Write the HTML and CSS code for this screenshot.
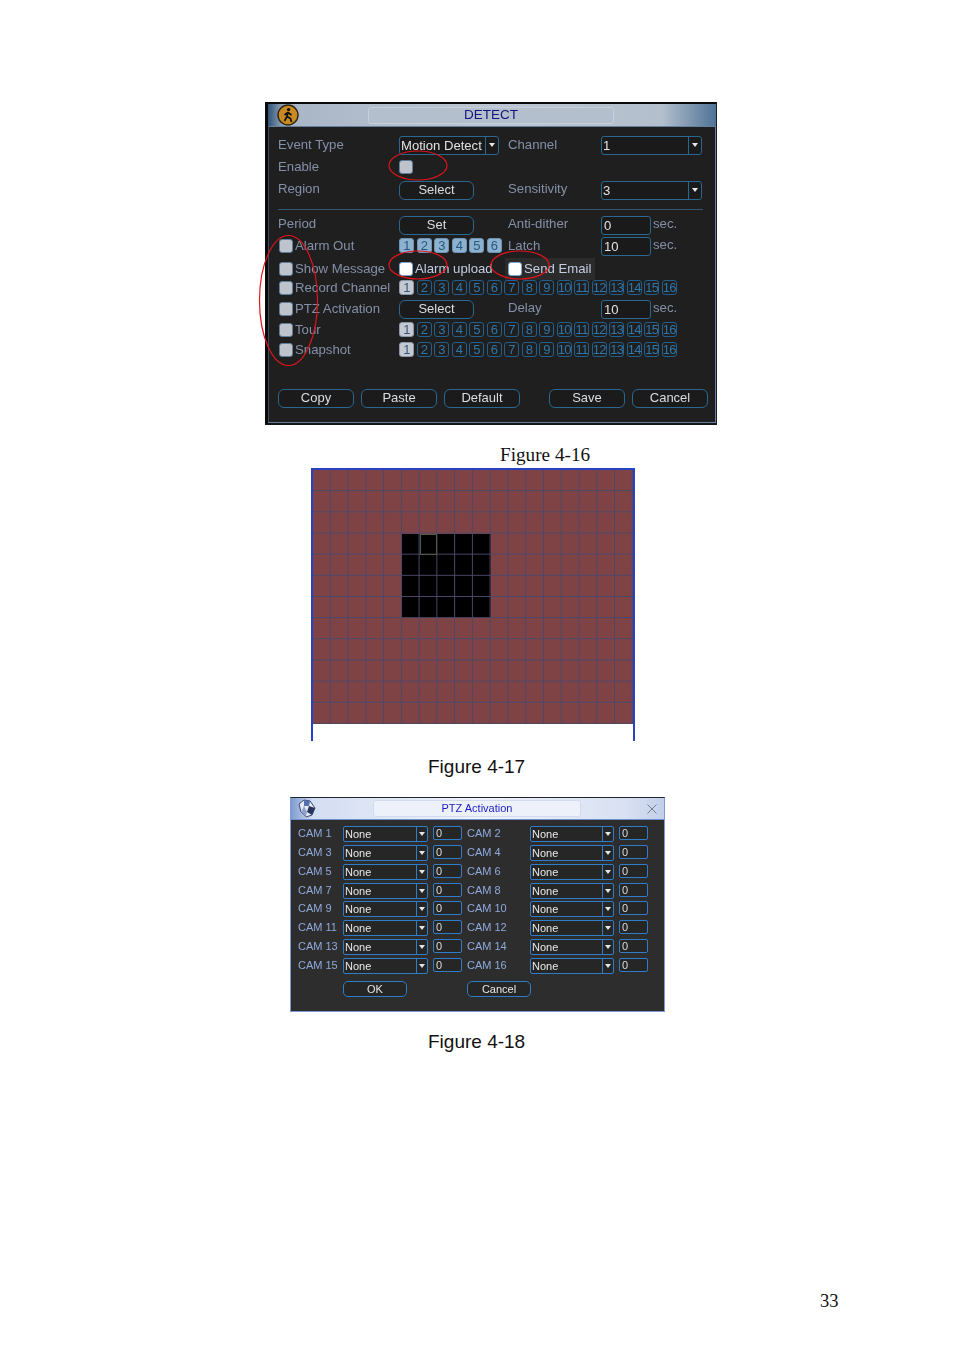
FILE: index.html
```html
<!DOCTYPE html>
<html lang="en">
<head>
    <meta charset="UTF-8">
    <meta name="viewport" content="width=device-width, initial-scale=1.0">
    <title>Figures 4-16 to 4-18</title>
    <link rel="stylesheet" href="styles.css">
</head>
<body>
<div class="page">

    <!-- Figure 4-16 -->
    <div class="detect">
        <div class="detect-title">
            <svg class="detect-icon" width="22" height="22" viewBox="0 0 22 22">
                <circle cx="11" cy="11" r="10" fill="#c98a22" stroke="#2b2412" stroke-width="1.4"/>
                <circle cx="11.6" cy="5.6" r="1.7" fill="#111"/>
                <path d="M11 8 L10 12.5 L7.5 17 M10 12.5 L13.5 14.5 L14.5 18 M10.8 8.5 L7.5 11 M11 8.5 L14.5 11" fill="none" stroke="#111" stroke-width="1.7"/>
            </svg>
            <div class="detect-caption">DETECT</div>
        </div>
        <div class="detect-panel">
            <div class="detect-form">
                <div class="lbl first">Event Type</div>
                <div class="sel sel-event"><span>Motion Detect</span><i></i></div>
                <div class="lbl">Channel</div>
                <div class="sel sel-wide"><span>1</span><i></i></div>

                <div class="lbl first">Enable</div>
                <div class="chk"></div>

                <div class="lbl up first">Region</div>
                <div class="btn">Select</div>
                <div class="lbl up">Sensitivity</div>
                <div class="sel sel-wide"><span>3</span><i></i></div>

                <div class="divider"></div>

                <div class="lbl up first">Period</div>
                <div class="btn">Set</div>
                <div class="lbl up">Anti-dither</div>
                <div class="num-wrap"><div class="num">0</div><span class="lbl">sec.</span></div>

                <div class="chk-row first"><div class="chk"></div><span class="lbl">Alarm Out</span></div>
                <div class="channels">
                    <b class="ch on">1</b><b class="ch on">2</b><b class="ch on">3</b><b class="ch on">4</b><b class="ch on">5</b><b class="ch on">6</b>
                </div>
                <div class="lbl">Latch</div>
                <div class="num-wrap"><div class="num">10</div><span class="lbl">sec.</span></div>

                <div class="chk-row first"><div class="chk"></div><span class="lbl">Show Message</span></div>
                <div class="chk-row"><div class="chk white"></div><span class="lbl bright">Alarm upload</span></div>
                <div class="chk-row send-email"><div class="chk white"></div><span class="lbl bright">Send Email</span></div>

                <div class="chk-row first"><div class="chk"></div><span class="lbl">Record Channel</span></div>
                <div class="channels span3">
                    <b class="ch sel-ch">1</b><b class="ch">2</b><b class="ch">3</b><b class="ch">4</b><b class="ch">5</b><b class="ch">6</b><b class="ch">7</b><b class="ch">8</b><b class="ch">9</b><b class="ch">10</b><b class="ch">11</b><b class="ch">12</b><b class="ch">13</b><b class="ch">14</b><b class="ch">15</b><b class="ch">16</b>
                </div>

                <div class="chk-row first"><div class="chk"></div><span class="lbl">PTZ Activation</span></div>
                <div class="btn">Select</div>
                <div class="lbl up">Delay</div>
                <div class="num-wrap"><div class="num">10</div><span class="lbl">sec.</span></div>

                <div class="chk-row first"><div class="chk"></div><span class="lbl">Tour</span></div>
                <div class="channels span3">
                    <b class="ch sel-ch">1</b><b class="ch">2</b><b class="ch">3</b><b class="ch">4</b><b class="ch">5</b><b class="ch">6</b><b class="ch">7</b><b class="ch">8</b><b class="ch">9</b><b class="ch">10</b><b class="ch">11</b><b class="ch">12</b><b class="ch">13</b><b class="ch">14</b><b class="ch">15</b><b class="ch">16</b>
                </div>

                <div class="chk-row first"><div class="chk"></div><span class="lbl">Snapshot</span></div>
                <div class="channels span3">
                    <b class="ch sel-ch">1</b><b class="ch">2</b><b class="ch">3</b><b class="ch">4</b><b class="ch">5</b><b class="ch">6</b><b class="ch">7</b><b class="ch">8</b><b class="ch">9</b><b class="ch">10</b><b class="ch">11</b><b class="ch">12</b><b class="ch">13</b><b class="ch">14</b><b class="ch">15</b><b class="ch">16</b>
                </div>
            </div>
            <div class="detect-footer">
                <div class="btn">Copy</div>
                <div class="btn">Paste</div>
                <div class="btn">Default</div>
                <div class="btn save-btn">Save</div>
                <div class="btn">Cancel</div>
            </div>
        </div>
        <!-- hand drawn red marks -->
        <svg class="marks" width="452" height="323" viewBox="0 0 452 323">
            <ellipse cx="153" cy="63.5" rx="29" ry="14.5"/>
            <ellipse cx="23.5" cy="198.5" rx="29" ry="65"/>
            <ellipse cx="153" cy="163" rx="29" ry="14"/>
            <ellipse cx="255" cy="163" rx="29" ry="14"/>
        </svg>
    </div>
    <p class="caption-serif">Figure 4-16</p>

    <!-- Figure 4-17 -->
    <div class="motion">
        <div class="motion-grid">
            <div class="motion-black"></div>
            <div class="motion-cursor"></div>
        </div>
    </div>
    <p class="caption-sans caption-17">Figure 4-17</p>

    <!-- Figure 4-18 -->
    <div class="ptz">
        <div class="ptz-title">
            <svg class="ptz-icon" width="20" height="19" viewBox="0 0 20 19">
                <polygon points="2,5 7,1 13,2 18,9 15,16 9,18 4,13" fill="#e6ebf5" stroke="#39496e" stroke-width="1"/>
                <polygon points="7,1 13,2 12,7 7,7" fill="#5672ae"/>
                <polygon points="12,7 18,9 15,16 10,13" fill="#26365c"/>
                <polygon points="4,13 7,7 10,13 9,18" fill="#8fa3cc"/>
            </svg>
            <div class="ptz-caption">PTZ Activation</div>
            <svg class="ptz-close" width="10" height="10" viewBox="0 0 10 10">
                <path d="M0.5 0.5 L9.5 9.5 M9.5 0.5 L0.5 9.5" stroke="#7b7f88" stroke-width="1" fill="none"/>
            </svg>
        </div>
        <div class="ptz-panel">
            <div class="ptz-form">
                <div class="cam">CAM 1</div><div class="psel"><span>None</span><i></i></div><div class="pnum">0</div>
                <div class="cam">CAM 2</div><div class="psel"><span>None</span><i></i></div><div class="pnum">0</div>
                <div class="cam">CAM 3</div><div class="psel"><span>None</span><i></i></div><div class="pnum">0</div>
                <div class="cam">CAM 4</div><div class="psel"><span>None</span><i></i></div><div class="pnum">0</div>
                <div class="cam">CAM 5</div><div class="psel"><span>None</span><i></i></div><div class="pnum">0</div>
                <div class="cam">CAM 6</div><div class="psel"><span>None</span><i></i></div><div class="pnum">0</div>
                <div class="cam">CAM 7</div><div class="psel"><span>None</span><i></i></div><div class="pnum">0</div>
                <div class="cam">CAM 8</div><div class="psel"><span>None</span><i></i></div><div class="pnum">0</div>
                <div class="cam">CAM 9</div><div class="psel"><span>None</span><i></i></div><div class="pnum">0</div>
                <div class="cam">CAM 10</div><div class="psel"><span>None</span><i></i></div><div class="pnum">0</div>
                <div class="cam">CAM 11</div><div class="psel"><span>None</span><i></i></div><div class="pnum">0</div>
                <div class="cam">CAM 12</div><div class="psel"><span>None</span><i></i></div><div class="pnum">0</div>
                <div class="cam">CAM 13</div><div class="psel"><span>None</span><i></i></div><div class="pnum">0</div>
                <div class="cam">CAM 14</div><div class="psel"><span>None</span><i></i></div><div class="pnum">0</div>
                <div class="cam">CAM 15</div><div class="psel"><span>None</span><i></i></div><div class="pnum">0</div>
                <div class="cam">CAM 16</div><div class="psel"><span>None</span><i></i></div><div class="pnum">0</div>
            </div>
            <div class="ptz-footer">
                <div class="pbtn">OK</div>
                <div class="pbtn">Cancel</div>
            </div>
        </div>
    </div>
    <p class="caption-sans caption-18">Figure 4-18</p>

    <p class="page-no">33</p>
</div>
</body>
</html>
```

FILE: styles.css
```css
* {
    box-sizing: border-box;
}

body {
    margin: 0;
    background-color: #fff;
    font-family: "Liberation Sans", Arial, sans-serif;
}

.page {
    width: 954px;
    height: 1350px;
    padding-top: 102px;
    overflow: hidden;
}

/* Figure 4-16 */
.detect {
    position: relative;
    width: 452px;
    height: 323px;
    margin-left: 265px;
    background-color: #1f1f1f;
    border-top: 2px solid #0a0a0a;
    border-left: 3px solid #0a0a0a;
    border-bottom: 2px solid #10161c;
    border-right: 1px solid #1a2026;
    display: flex;
    flex-direction: column;
}

.detect-title {
    display: flex;
    align-items: center;
    height: 22px;
    padding-left: 9px;
    background: linear-gradient(to right, #2f5378 0, #a9b6c6 4%, #bcc6d2 50%, #b3bfcc 88%, #4f7398 100%);
    filter: blur(0.4px);
}

.detect-icon {
    flex: none;
}

.detect-caption {
    width: 246px;
    height: 17px;
    margin-left: 69px;
    background-color: #b4bfce;
    border: 1px solid #c6cfda;
    border-radius: 3px;
    color: #14147c;
    font-size: 13.5px;
    line-height: 13px;
    text-align: center;
}

.detect-panel {
    flex: 1;
    border: 1px solid #64809c;
    border-left-color: #3b4c5c;
    padding: 7px 0 0 9px;
    filter: blur(0.4px);
}

.detect-form {
    display: grid;
    grid-template-columns: 121px 109px 93px 102px;
    grid-template-rows: 22px 22px 24px 14px 18px 24px 22px 16px 26px 16px 24px;
    align-items: center;
}

.first {
    grid-column: 1;
}

.lbl {
    margin-top: -2px;
    color: #8490a8;
    font-size: 13.2px;
    white-space: nowrap;
}

.lbl.up {
    margin-top: -4px;
}

.lbl.bright {
    color: #c3cee2;
}

.chk-row .lbl {
    margin-top: 0;
}

.divider {
    grid-column: 1 / -1;
    height: 1px;
    background-color: #35566e;
}

.sel {
    display: flex;
    height: 19px;
    background-color: #1a1a1a;
    border: 1.5px solid #29688f;
    border-radius: 3px;
    color: #e2e2e2;
    font-size: 13.1px;
    line-height: 17px;
}

.sel span {
    flex: 1;
    padding-left: 1px;
}

.sel i {
    position: relative;
    width: 13px;
    border-left: 1px solid #29688f;
}

.sel i::after,
.psel i::after {
    content: "";
    position: absolute;
    top: 6px;
    left: 3px;
    border-top: 4px solid #e6e6e6;
    border-left: 3px solid transparent;
    border-right: 3px solid transparent;
}

.sel-event {
    width: 100px;
}

.sel-wide {
    width: 101px;
}

.chk {
    flex: none;
    width: 14px;
    height: 14px;
    background-color: #bfc3cb;
    border: 1px solid #5d7d9c;
    border-radius: 3px;
}

.chk.white {
    background-color: #fff;
    border-color: #7ea4c8;
}

.chk-row {
    display: flex;
    align-items: center;
    gap: 2px;
    height: 100%;
    margin-top: -1px;
}

.chk-row.first {
    padding-left: 1px;
}

.send-email {
    grid-column: 3 / 5;
    width: 90px;
    margin-left: -3px;
    padding-left: 3px;
    background-color: #2b2b2b;
}

.btn {
    width: 75px;
    height: 19px;
    background-color: #1b1b1b;
    border: 1.5px solid #29688f;
    border-radius: 6px;
    color: #d9dde2;
    font-size: 13px;
    line-height: 16px;
    text-align: center;
}

.num-wrap {
    display: flex;
    align-items: center;
    gap: 2px;
}

.num-wrap .lbl {
    margin-top: -3px;
}

.num {
    width: 50px;
    height: 19px;
    padding-left: 2px;
    background-color: #1a1a1a;
    border: 1.5px solid #29688f;
    border-radius: 3px;
    color: #e2e2e2;
    font-size: 13.1px;
    line-height: 17px;
}

.channels {
    display: flex;
    gap: 2.53px;
    margin-top: -2px;
}

.span3 {
    grid-column: 2 / 5;
}

.ch {
    flex: none;
    width: 15px;
    height: 15px;
    border: 1px solid #235f8c;
    border-radius: 3px;
    color: #2f76aa;
    font-size: 13px;
    font-weight: normal;
    line-height: 13px;
    text-align: center;
    letter-spacing: -0.6px;
}

.ch.on {
    background-color: #8db2d0;
    border-color: #6d94b5;
    color: #28587f;
}

.ch.sel-ch {
    background-color: #c4c8d0;
    border-color: #8c98a8;
    color: #34587c;
}

.detect-footer {
    display: flex;
    gap: 7px;
    margin-top: 27px;
}

.detect-footer .btn {
    width: 76px;
}

.detect-footer .save-btn {
    margin-left: 22px;
}

.marks {
    position: absolute;
    top: -2px;
    left: -3px;
    overflow: visible;
    pointer-events: none;
}

.marks ellipse {
    fill: none;
    stroke: #e0141c;
    stroke-width: 1.2;
}

/* captions */
.caption-serif {
    margin: 19px 0 0 500px;
    font-family: "Liberation Serif", "Times New Roman", serif;
    font-size: 19.2px;
    line-height: 21px;
    color: #111;
}

.caption-sans {
    font-size: 19px;
    line-height: 21px;
    color: #111;
}

.caption-17 {
    margin: 15px 0 20px 428px;
}

.caption-18 {
    margin: 19px 0 0 428px;
}

.page-no {
    margin: 239px 0 0 820px;
    font-family: "Liberation Serif", "Times New Roman", serif;
    font-size: 18.5px;
    line-height: 21px;
    color: #111;
}

/* Figure 4-17 */
.motion {
    width: 324px;
    height: 273px;
    margin: 3px 0 0 311px;
    border: 2px solid #2743c4;
    border-bottom: none;
}

.motion-grid {
    position: relative;
    display: grid;
    grid-template-columns: repeat(18, 1fr);
    grid-template-rows: repeat(12, 1fr);
    width: 320px;
    height: 254px;
    background-color: #7f4345;
    filter: blur(0.4px);
}

/* the lines run over the black cells too */
.motion-grid::after {
    content: "";
    position: absolute;
    inset: 0;
    background-image:
        linear-gradient(to left, #4a4868 1.3px, transparent 1.3px),
        linear-gradient(to top, #4a4868 1.3px, transparent 1.3px);
    background-size: 17.78px 21.17px;
}

.motion-black {
    grid-column: 6 / 11;
    grid-row: 4 / 8;
    background-color: #000;
}

.motion-cursor {
    grid-column: 7;
    grid-row: 4;
    position: relative;
    z-index: 1;
    border: 1px solid #4f5c42;
}

/* Figure 4-18 */
.ptz {
    width: 375px;
    height: 215px;
    margin-left: 290px;
    background-color: #2d2d2d;
    border: 1px solid #7d9ad6;
    border-top: 1px solid #20242e;
    display: flex;
    flex-direction: column;
    filter: blur(0.3px);
}

.ptz-title {
    position: relative;
    display: flex;
    align-items: center;
    height: 22px;
    padding-left: 6px;
    background: linear-gradient(to right, #7e9bd0 0, #d4def2 6%, #eef2fa 50%, #d8e0f2 90%, #c3cfea 100%);
    border-bottom: 1px solid #6f8fcf;
}

.ptz-icon {
    flex: none;
}

.ptz-caption {
    width: 208px;
    height: 17px;
    margin-left: 56px;
    background-color: #edf1fa;
    border: 1px solid #d3dcef;
    border-radius: 3px;
    color: #1d1dc4;
    font-size: 11px;
    line-height: 14px;
    text-align: center;
}

.ptz-close {
    position: absolute;
    top: 6px;
    right: 7px;
}

.ptz-panel {
    flex: 1;
    padding: 5px 0 0 7px;
}

.ptz-form {
    display: grid;
    grid-template-columns: 45px 85px 39px 63px 84px 34px;
    grid-auto-rows: 18.75px;
    align-items: center;
}

.cam {
    margin-top: -2px;
    color: #8fa9dc;
    font-size: 11px;
    white-space: nowrap;
}

.psel {
    display: flex;
    height: 16px;
    background-color: #262626;
    border: 1px solid #2f7cc8;
    border-radius: 2px;
    color: #e8e8e8;
    font-size: 11px;
    line-height: 15px;
}

.psel span {
    flex: 1;
    padding-left: 1px;
}

.psel i {
    position: relative;
    width: 11px;
    border-left: 1px solid #2f7cc8;
}

.psel i::after {
    top: 5px;
    left: 2px;
}

.pnum {
    width: 29px;
    height: 14px;
    margin: -2px 0 0 5px;
    padding-left: 2px;
    background-color: #262626;
    border: 1px solid #2f7cc8;
    border-radius: 2px;
    color: #dcdcdc;
    font-size: 11px;
    line-height: 12px;
}

.ptz-footer {
    display: flex;
    gap: 60px;
    margin: 6px 0 0 45px;
}

.pbtn {
    width: 64px;
    height: 16px;
    background-color: #262626;
    border: 1px solid #2f7cc8;
    border-radius: 5px;
    color: #e6e6e6;
    font-size: 11px;
    line-height: 14px;
    text-align: center;
}
```
